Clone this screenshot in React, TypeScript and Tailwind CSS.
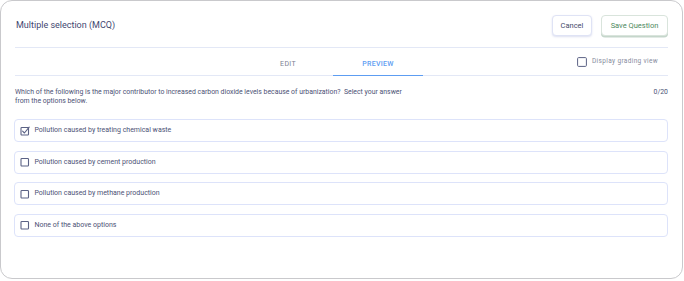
import React from "react";

const options = [
  { label: "Pollution caused by treating chemical waste", checked: true },
  { label: "Pollution caused by cement production", checked: false },
  { label: "Pollution caused by methane production", checked: false },
  { label: "None of the above options", checked: false },
];

function Box({ checked }: { checked: boolean }) {
  return (
    <svg width="10" height="10" viewBox="0 0 10 10" className="shrink-0">
      <rect x="1" y="1.5" width="7.5" height="7.5" rx="0.8" fill="none" stroke="#5b6285" strokeWidth="1.1" />
      {checked && (
        <path d="M2.6 5.2 L4.4 7 L9.2 1.2" fill="none" stroke="#5b6285" strokeWidth="1.1" strokeLinecap="round" strokeLinejoin="round" />
      )}
    </svg>
  );
}

export default function App() {
  return (
    <div className="w-[684px] h-[281px] bg-white" style={{ fontFamily: "Roboto, 'Liberation Sans', sans-serif" }}>
      <div className="w-[683px] h-[279px] border border-[#c9c9cc] rounded-[12px] bg-white px-[14px]">
        <div className="flex items-center justify-between pt-[14px] pb-[11px] border-b border-[#e3e8f6]">
          <div className="text-[9px] text-[#3f4770] pl-px">Multiple selection (MCQ)</div>
          <div className="flex items-center gap-[9px]">
            <button className="h-[21px] w-[40px] rounded-[4px] border border-[#dfe3f5] bg-white text-[7.5px] text-[#454b6b] shadow-[0_1px_2px_rgba(120,130,200,0.25)]">
              Cancel
            </button>
            <button className="h-[21px] w-[67px] rounded-[4px] border border-[#d9e4dc] bg-white text-[7.5px] text-[#4e8a5e] shadow-[0_1.5px_0_rgba(150,180,160,0.55)]">
              Save Question
            </button>
          </div>
        </div>
        <div className="flex items-stretch h-[28px] border-b border-[#e3e8f6]">
          <div className="w-[228px]" />
          <div className="w-[90px] flex items-center justify-center text-[7px] tracking-[0.3px] text-[#7c8093] pt-[6px]">EDIT</div>
          <div className="w-[90px] flex items-center justify-center text-[7px] tracking-[0.3px] font-medium text-[#5d9df2] pt-[6px] border-b-[1.5px] border-[#5d9df2] -mb-px">PREVIEW</div>
          <div className="flex-1 flex justify-end items-start pt-[9px] pr-[10px]">
            <div className="flex items-center gap-[5px]">
              <svg width="10" height="10" viewBox="0 0 10 10">
                <rect x="0.6" y="0.6" width="8.8" height="8.8" rx="1" fill="none" stroke="#5b6285" strokeWidth="1" />
              </svg>
              <span className="text-[6.5px] tracking-[0.35px] text-[#868b9d]">Display grading view</span>
            </div>
          </div>
        </div>
        <div className="flex justify-between pt-[12px] text-[6.9px] leading-[9px] text-[#4c5275]">
          <div className="w-[400px]">
            Which of the following is the major contributor to increased carbon dioxide levels because of urbanization?&nbsp; Select your answer from the options below.
          </div>
          <div>0/20</div>
        </div>
        <div className="flex flex-col gap-[8.5px] mt-[13px] -ml-px">
          {options.map((o) => (
            <div key={o.label} className="h-[23px] flex items-center gap-[4.5px] pl-[5px] border border-[#dde3fa] rounded-[4px]">
              <Box checked={o.checked} />
              <span className="text-[7px] text-[#4c5275]">{o.label}</span>
            </div>
          ))}
        </div>
      </div>
    </div>
  );
}
